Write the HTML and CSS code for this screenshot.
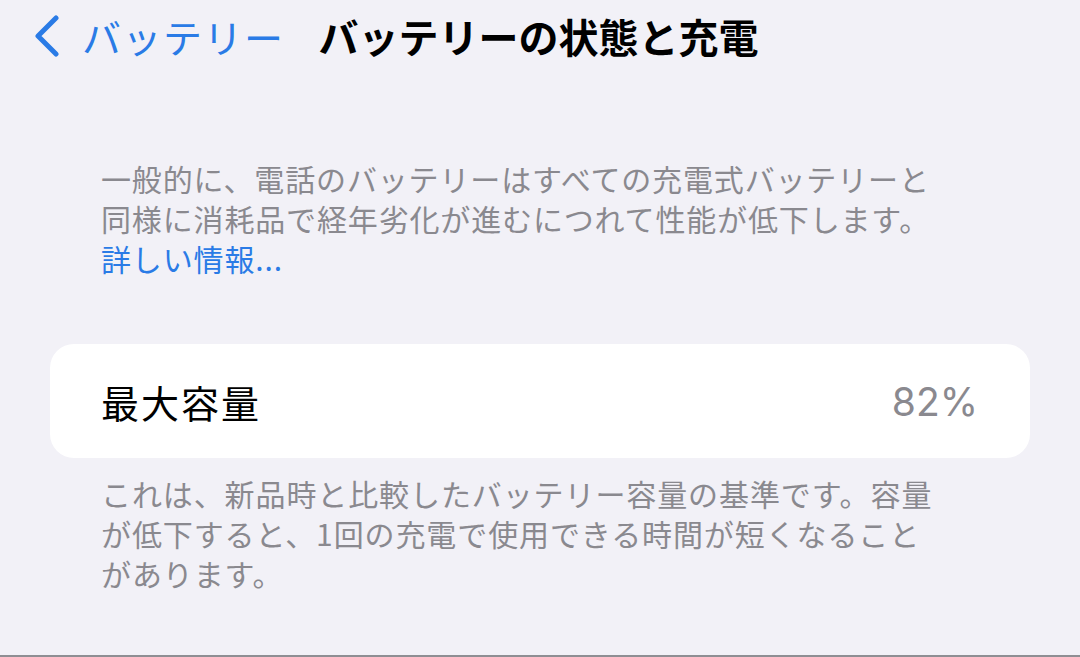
FILE: index.html
```html
<!DOCTYPE html>
<html lang="ja">
<head>
    <meta charset="UTF-8">
    <meta name="viewport" content="width=device-width, initial-scale=1.0">
    <title>バッテリーの状態と充電</title>
    <link rel="stylesheet" href="styles.css">
</head>
<body>
    <div class="screen">
        <div class="nav-bar">
            <a class="back-link" href="#">
                <svg class="chevron" width="30" height="42" viewBox="0 0 30 42">
                    <path d="M24 3 L6 21 L24 39" fill="none" stroke="#2a7be6" stroke-width="5" stroke-linecap="round" stroke-linejoin="round"/>
                </svg>
                <span class="back-text">バッテリー</span>
            </a>
            <h1 class="nav-title">バッテリーの状態と充電</h1>
        </div>

        <p class="intro">
            一般的に、電話のバッテリーはすべての充電式バッテリーと<br>
            同様に消耗品で経年劣化が進むにつれて性能が低下します。<br>
            <a class="more-link" href="#">詳しい情報...</a>
        </p>

        <div class="card">
            <span class="card-label">最大容量</span>
            <span class="card-value">82%</span>
        </div>

        <p class="footnote">
            これは、新品時と比較したバッテリー容量の基準です。容量<br>
            が低下すると、1回の充電で使用できる時間が短くなること<br>
            があります。
        </p>
    </div>
    <div class="bottom-rule"></div>
</body>
</html>
```

FILE: styles.css
```css
html, body {
    margin: 0;
    padding: 0;
}

body {
    width: 1080px;
    height: 657px;
    overflow: hidden;
    background-color: #f2f1f7;
    font-family: "Noto Sans CJK JP", "Noto Sans", sans-serif;
    color: #000;
    display: flex;
    flex-direction: column;
}

.screen {
    flex: 1;
}

.nav-bar {
    display: flex;
    align-items: center;
    height: 72px;
    padding-left: 32px;
}

.back-link {
    display: flex;
    align-items: center;
    gap: 20px;
    text-decoration: none;
    color: #2a7be6;
}

.chevron {
    display: block;
}

.back-text {
    font-size: 39px;
    line-height: 1;
    letter-spacing: 1.5px;
}

.nav-title {
    margin: 0 0 0 34px;
    font-size: 40px;
    font-weight: 700;
    line-height: 1;
    letter-spacing: 0;
}

.intro {
    margin: 86px 0 0;
    padding-left: 101px;
    font-size: 30px;
    line-height: 40px;
    letter-spacing: 0.85px;
    color: #8a898f;
}

.more-link {
    color: #2a7be6;
    text-decoration: none;
}

.card {
    display: flex;
    justify-content: space-between;
    align-items: center;
    margin: 66px 50px 0;
    height: 114px;
    padding: 0 52px 0 51px;
    background-color: #fff;
    border-radius: 24px;
}

.card-label {
    font-size: 38px;
    letter-spacing: 2px;
}

.card-value {
    font-family: Inter, "Noto Sans", sans-serif;
    font-size: 39px;
    color: #8a898f;
}

.footnote {
    margin: 15px 0 0;
    padding-left: 101px;
    font-size: 30px;
    line-height: 40px;
    letter-spacing: 0.9px;
    color: #8a898f;
}

.bottom-rule {
    height: 2px;
    background-color: #8e8e93;
}
```
